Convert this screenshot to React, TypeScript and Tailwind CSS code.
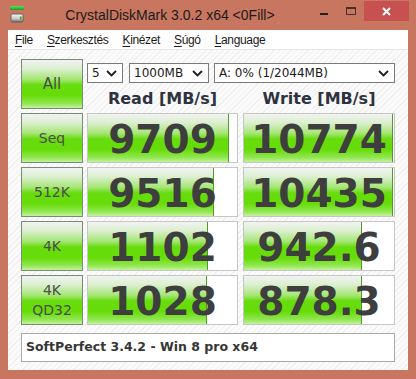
import React from "react";

const rows = [
  { label: ["Seq"], read: "9709", readPct: 94.6, write: "10774", writePct: 99.4 },
  { label: ["512K"], read: "9516", readPct: 84.6, write: "10435", writePct: 99.4 },
  { label: ["4K"], read: "1102", readPct: 80.5, write: "942.6", writePct: 78.7 },
  { label: ["4K", "QD32"], read: "1028", readPct: 80, write: "878.3", writePct: 78.5 },
];

const green =
  "bg-[linear-gradient(to_bottom,#f1f3f1_0%,#dcefd0_18%,#a6e676_40%,#68dc0e_52%,#66dc08_74%,#8ee64c_90%,#c2f29c_100%)]";

const Chevron = () => (
  <svg width="11" height="7" viewBox="0 0 11 7" className="shrink-0">
    <path d="M1 1 L5.5 5.5 L10 1" fill="none" stroke="#1e1e1e" strokeWidth="1.8" />
  </svg>
);

const Select = ({ text, w }: { text: string; w: string }) => (
  <div
    className={`${w} flex h-[20px] items-center justify-between border border-[#7a7a7a] bg-white pl-[4px] pr-[5px] text-[12px] text-[#1a1a1a]`}
  >
    <span>{text}</span>
    <Chevron />
  </div>
);

const Meter = ({ value, pct, w }: { value: string; pct: number; w: string }) => (
  <div className={`relative h-[50px] ${w} border border-[#c6c6c6] bg-white`}>
    <div className={`h-full border-r border-[#4f9a28] ${green}`} style={{ width: `${pct}%` }} />
    <div className="absolute inset-0 flex items-center justify-center pt-[3px] text-[39px] font-bold leading-none text-[#3e3e3e]">
      {value}
    </div>
  </div>
);

const LabelButton = ({ lines, big }: { lines: string[]; big?: boolean }) => (
  <div
    className={`flex h-[50px] w-[62px] shrink-0 flex-col items-center justify-center border border-[#7b8a79] ${green} ${
      big ? "text-[15px]" : "text-[14px] leading-[20px]"
    } text-[#4c4c4c]`}
  >
    {lines.map((l) => (
      <span key={l}>{l}</span>
    ))}
  </div>
);

export default function App() {
  return (
    <div className="flex h-[379px] w-[416px] flex-col bg-[#c97660] font-['DejaVu_Sans',sans-serif]">
      {/* title bar */}
      <div className="flex h-[30px] shrink-0 items-start">
        <div className="w-[30px] pl-[9px] pt-[5px]">
          <svg width="16" height="18" viewBox="0 0 16 18">
            <defs>
              <linearGradient id="gb" x1="0" y1="0" x2="0" y2="1">
                <stop offset="0" stopColor="#5ee05a" />
                <stop offset="1" stopColor="#1f9a25" />
              </linearGradient>
              <linearGradient id="dr" x1="0" y1="0" x2="0" y2="1">
                <stop offset="0" stopColor="#f4f4f4" />
                <stop offset="0.6" stopColor="#c8c8c8" />
                <stop offset="1" stopColor="#6a6a6a" />
              </linearGradient>
            </defs>
            <rect x="1" y="1" width="14" height="4" rx="1" fill="url(#gb)" />
            <rect x="2" y="9" width="12" height="8" rx="1.5" fill="url(#dr)" stroke="#555" strokeWidth="0.8" />
            <rect x="11" y="11.5" width="1.6" height="3" fill="#21b521" />
          </svg>
        </div>
        <div className="flex-1 text-center font-['Liberation_Sans',Arial,sans-serif] text-[14px] leading-[30px] text-[#1b1b1b]">
          CrystalDiskMark 3.0.2 x64 &lt;0Fill&gt;
        </div>
        <div className="flex w-[106px] items-start">
          <div className="ml-[10px] mt-[13px] h-[2px] w-[8px] bg-[#222]" />
          <div className="ml-[18px] mt-[7px] h-[8px] w-[10px] border border-t-2 border-[#4a3028]" />
          <div className="ml-[8px] mt-[1px] flex h-[20px] w-[45px] items-center justify-center bg-[#c75050]">
            <svg width="9" height="9" viewBox="0 0 9 9">
              <path d="M1 1 L8 8 M8 1 L1 8" stroke="#fff" strokeWidth="2" />
            </svg>
          </div>
        </div>
      </div>

      {/* menu */}
      <div className="mx-[8px] flex h-[20px] shrink-0 items-center gap-[14px] border-b border-[#e6e6e6] bg-white pl-[7px] font-['Liberation_Sans',Arial,sans-serif] text-[12px] tracking-[-0.35px] text-[#1a1a1a]">
        <span>
          <span className="underline underline-offset-2">F</span>ile
        </span>
        <span>
          <span className="underline underline-offset-2">S</span>zerkesztés
        </span>
        <span>
          <span className="underline underline-offset-2">K</span>inézet
        </span>
        <span>
          <span className="underline underline-offset-2">S</span>úgó
        </span>
        <span>
          <span className="underline underline-offset-2">L</span>anguage
        </span>
      </div>

      {/* client */}
      <div className="mx-[8px] mb-[9px] flex flex-1 flex-col gap-[4px] bg-[repeating-linear-gradient(135deg,#efefef_0px,#efefef_1px,#fbfbfb_1px,#fbfbfb_4px)] pl-[13px] pt-[9px]">
        <div className="flex gap-[4px]">
          <LabelButton lines={["All"]} big />
          <div className="flex flex-col">
            <div className="mt-[4px] flex gap-[6px]">
              <Select text="5" w="w-[36px]" />
              <Select text="1000MB" w="w-[80px]" />
              <Select text="A: 0% (1/2044MB)" w="w-[181px] -ml-[1px]" />
            </div>
            <div className="mt-[6px] flex gap-[5px] text-[16px] font-bold leading-[20px] text-[#2e3240]">
              <div className="w-[151px] text-center">Read [MB/s]</div>
              <div className="w-[152px] text-center">Write [MB/s]</div>
            </div>
          </div>
        </div>

        {rows.map((r) => (
          <div key={r.read} className="flex">
            <LabelButton lines={r.label} />
            <div className="ml-[4px]">
              <Meter value={r.read} pct={r.readPct} w="w-[151px]" />
            </div>
            <div className="ml-[5px]">
              <Meter value={r.write} pct={r.writePct} w="w-[152px]" />
            </div>
          </div>
        ))}

        <div className="mt-[4px] flex h-[29px] w-[374px] items-center border border-[#a9a9a9] bg-white pl-[4px] text-[12.5px] font-bold text-[#363636]">
          SoftPerfect 3.4.2 - Win 8 pro x64
        </div>
      </div>
    </div>
  );
}
